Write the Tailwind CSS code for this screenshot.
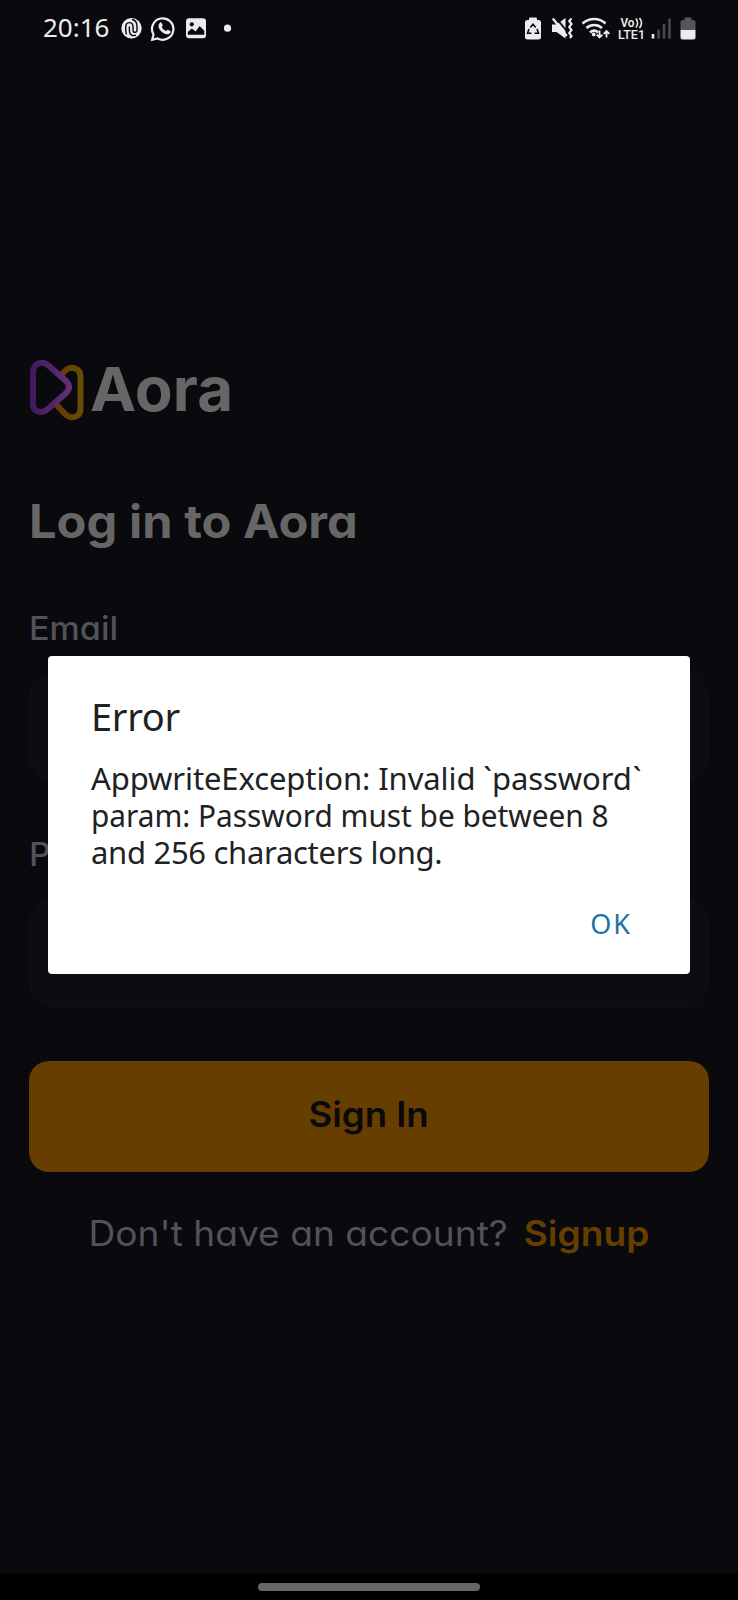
<!DOCTYPE html>
<html lang="en">
<head>
<meta charset="utf-8">
<title>Aora</title>
<script src="https://cdn.jsdelivr.net/npm/@tailwindcss/browser@4"></script>
</head>
<body class="bg-[#09090e]">
<div class="relative flex h-[1600px] w-[738px] flex-col overflow-hidden bg-[#09090e] font-[Inter,sans-serif] [font-feature-settings:'cv11']">
  <header class="flex h-14 shrink-0 items-center justify-between pr-[42px] pl-[43px] text-[#ececef]">
    <div class="flex items-center">
      <span class="w-[78px] pb-0.5 font-['Noto_Sans',sans-serif] text-[26px] leading-none whitespace-nowrap">20:16</span>
      <svg class="block" width="120" height="28" viewBox="0 0 120 28" fill="none" stroke="currentColor">
        <circle cx="10.500" cy="14.200" r="10.200" fill="currentColor" stroke="none"/>
        <path d="M5.500 20.500c-1-2-.8-4.500-.8-7.500 0-5.500 7.300-6 7.300-.5v4c0 2.500 4 2.500 4-.5v-3.500c0-3.500-1.500-6.500-5-7M8.400 12.500v4.500c0 4.500 3.500 5 6.500 4.300" stroke="#09090e" stroke-width="1.400"/>
        <path d="M32.500 20.500l-1.300 5.300 5.500-1.300A10.700 10.700 0 1 0 32.500 20.500z" stroke-width="2.200"/>
        <path transform="translate(1.200 .4)" d="M37.500 8.500c.8-.8 1.700-.7 2 .1l1 2.300c.2.600-1 1.500-.8 2 .9 1.800 2.200 2.900 4 3.700.6.200 1.300-1.500 2-1.300l2.400 1.200c.6.300.4 1.300 0 1.900-1 1.500-3 1.800-4.700 1.200-3.400-1.200-5.700-3.500-6.700-6-.7-1.900-.3-4 .8-5.100z" fill="currentColor" stroke="none"/>
        <rect x="65" y="4.300" width="20" height="20" rx="3" fill="currentColor" stroke="none"/>
        <circle cx="70.800" cy="10.300" r="2.100" fill="#09090e" stroke="none"/>
        <path d="M66.800 20.700v-2.700l4-3.500 3.800 3 4-5.500 4.700 4.700v4z" fill="#09090e" stroke="none"/>
        <circle cx="106.500" cy="14.200" r="3.600" fill="currentColor" stroke="none"/>
      </svg>
    </div>
    <svg class="block" width="172" height="28" viewBox="524 14 172 28" fill="none" stroke="currentColor">
      <path d="M525 22.500q0-2.500 2.500-2.500h1.500v-1.300q0-1.200 1.200-1.200h5.600q1.200 0 1.200 1.200v1.300h1.500q2.500 0 2.500 2.500v14.500q0 2.500-2.500 2.500h-11q-2.500 0-2.500-2.500z" fill="currentColor" stroke="none"/>
      <path d="M530.300 27.500l2.700-3.200 2.700 3.200M537 29l1.500 4.200h-4M531.500 33.200h-4l1.500-4.200" stroke="#09090e" stroke-width="1.600"/>
      <path d="M552 24.500h4.500l9-6.500v20.500l-9-6.500h-4.500z" fill="currentColor" stroke="none"/>
      <path d="M555 16.500l14.500 18" stroke="#09090e" stroke-width="1.900"/>
      <path d="M552.800 18.500l14 17.500" stroke-width="2.300"/>
      <path d="M571.500 18.500l-2.300 2.500 2.300 3-2.300 3 2.300 3-2.300 3 2.300 3-1.500 2" stroke-width="2.100"/>
      <path d="M582.500 23.500c7-6 16.500-6 23 0M586.500 28c4.600-4 11-4 15.500 0M590 32.500c2.700-2.200 5.800-2.200 8 0" stroke-width="2.700"/>
      <circle cx="593.700" cy="34.500" r="1.900" fill="currentColor" stroke="none"/>
      <path d="M599.500 30.500v7M596.700 34.700l2.800 2.800 2.800-2.800M606.500 37.500v-6.500M603.700 33.800l2.800-2.800 2.800 2.800" stroke-width="1.900"/>
      <text x="620.500" y="27" textLength="14" lengthAdjust="spacingAndGlyphs" font-family="Roboto" font-size="12.500" font-weight="600" fill="currentColor" stroke="none">Vo</text>
      <path d="M636 18.500q3.200 4.500 0 9M639.500 18q4 5 0 10" stroke-width="1.600"/>
      <text x="618" y="39" textLength="27" lengthAdjust="spacingAndGlyphs" font-family="Roboto" font-size="13" font-weight="500" fill="currentColor" stroke="none">LTE1</text>
      <path d="M653 34v4.500" stroke-width="2.600"/>
      <path d="M658.500 29.500v9M664 24v14.500M669.500 18.500v20" stroke="#4b4b50" stroke-width="2.500"/>
      <path d="M680.500 30v-7.500q0-2.500 2.500-2.500h1.500v-1.300q0-1.200 1.200-1.200h4.600q1.200 0 1.200 1.200v1.300h1.500q2.500 0 2.500 2.500v7.500z" fill="#56565a" stroke="none"/>
      <path d="M680.500 30h15v7q0 2.500-2.500 2.500h-10q-2.500 0-2.500-2.500z" fill="currentColor" stroke="none"/>
    </svg>
  </header>

  <main class="flex grow flex-col px-[29px] pt-[303px]">
    <div class="flex h-[62px] items-center gap-[5px]">
      <svg class="block shrink-0" width="56" height="62" viewBox="0 0 56 62" fill="none">
        <defs>
          <linearGradient id="p" x1="0" y1="0" x2="1" y2="0"><stop offset="0" stop-color="#411a5e"/><stop offset="1" stop-color="#633072"/></linearGradient>
          <linearGradient id="o" x1="0" y1="0" x2="1" y2="0"><stop offset="0" stop-color="#663800"/><stop offset="1" stop-color="#664c04"/></linearGradient>
        </defs>
        <path d="M25 43L36 55C42 61 51.500 58 51.500 50V18C51.500 9 42 6 36 12L27 21" stroke="url(#o)" stroke-width="6"/>
        <path d="M4 14C4 4 13 1 20 7L37 22Q43 28 37 34L20 49C13 56 4 53 4 45Z" fill="#09090e" stroke="url(#p)" stroke-width="6"/>
      </svg>
      <span class="origin-left scale-x-[1.015] pb-0.5 text-[61px] leading-none font-bold whitespace-nowrap text-[#666] [font-feature-settings:normal]">Aora</span>
    </div>
    <h1 class="mt-[70px] h-[63px] origin-left scale-x-[1.05] text-[46.500px] leading-[60px] font-[650] whitespace-nowrap text-[#666]">Log in to Aora</h1>
    <div class="mt-[55px] flex flex-col gap-[22px]">
      <label class="h-10 origin-left scale-x-[1.065] text-[32px] leading-10 font-medium text-[#525259]">Email</label>
      <div class="h-[112px] rounded-[28px] border-2 border-[#0e0f14] bg-[#0c0c12]"></div>
    </div>
    <div class="mt-[52px] flex flex-col gap-[22px]">
      <label class="h-10 origin-left scale-x-[1.065] text-[32px] leading-10 font-medium text-[#525259]">Password</label>
      <div class="h-[112px] rounded-[28px] border-2 border-[#0e0f14] bg-[#0c0c12]"></div>
    </div>
    <button class="mt-[52px] flex h-[111px] shrink-0 items-center justify-center rounded-[20px] bg-[#663e00] pb-1 text-[35px] leading-none font-semibold text-[#09090e]"><span class="scale-x-[1.045]">Sign In</span></button>
    <p class="mt-[39px] flex h-[44px] scale-x-[1.061] items-center justify-center gap-[15px] text-[35px] whitespace-nowrap">
      <span class="text-[#525259]">Don't have an account?</span><a class="font-semibold text-[#663e00]">Signup</a>
    </p>
  </main>

  <footer class="flex h-[27px] shrink-0 items-center justify-center bg-black"><div class="h-2 w-[222px] rounded-full bg-[#666]"></div></footer>

  <section class="absolute top-[656px] left-12 flex h-[318px] w-[642px] flex-col rounded-[4px] bg-white px-[43px] pt-[34px] font-['Noto_Sans',sans-serif] text-[#202123]">
    <h2 class="h-[52px] text-[38px] leading-[52px] tracking-[-0.300px]">Error</h2>
    <p class="mt-[18px] flex flex-col text-[31px] leading-[37px] whitespace-nowrap">
      <span class="tracking-[-0.100px]">AppwriteException: Invalid<span class="ml-[8px] tracking-normal">`</span>password<span class="ml-[1px]">`</span></span>
      <span class="origin-left scale-x-[0.961]">param: Password must be between 8</span>
      <span class="tracking-[-0.300px]">and 256 characters long.</span>
    </p>
    <div class="mt-[29px] flex justify-end pr-[15px] text-[27px] leading-[48px] tracking-[2px] text-[#2272aa]">OK</div>
  </section>
</div>
</body>
</html>
